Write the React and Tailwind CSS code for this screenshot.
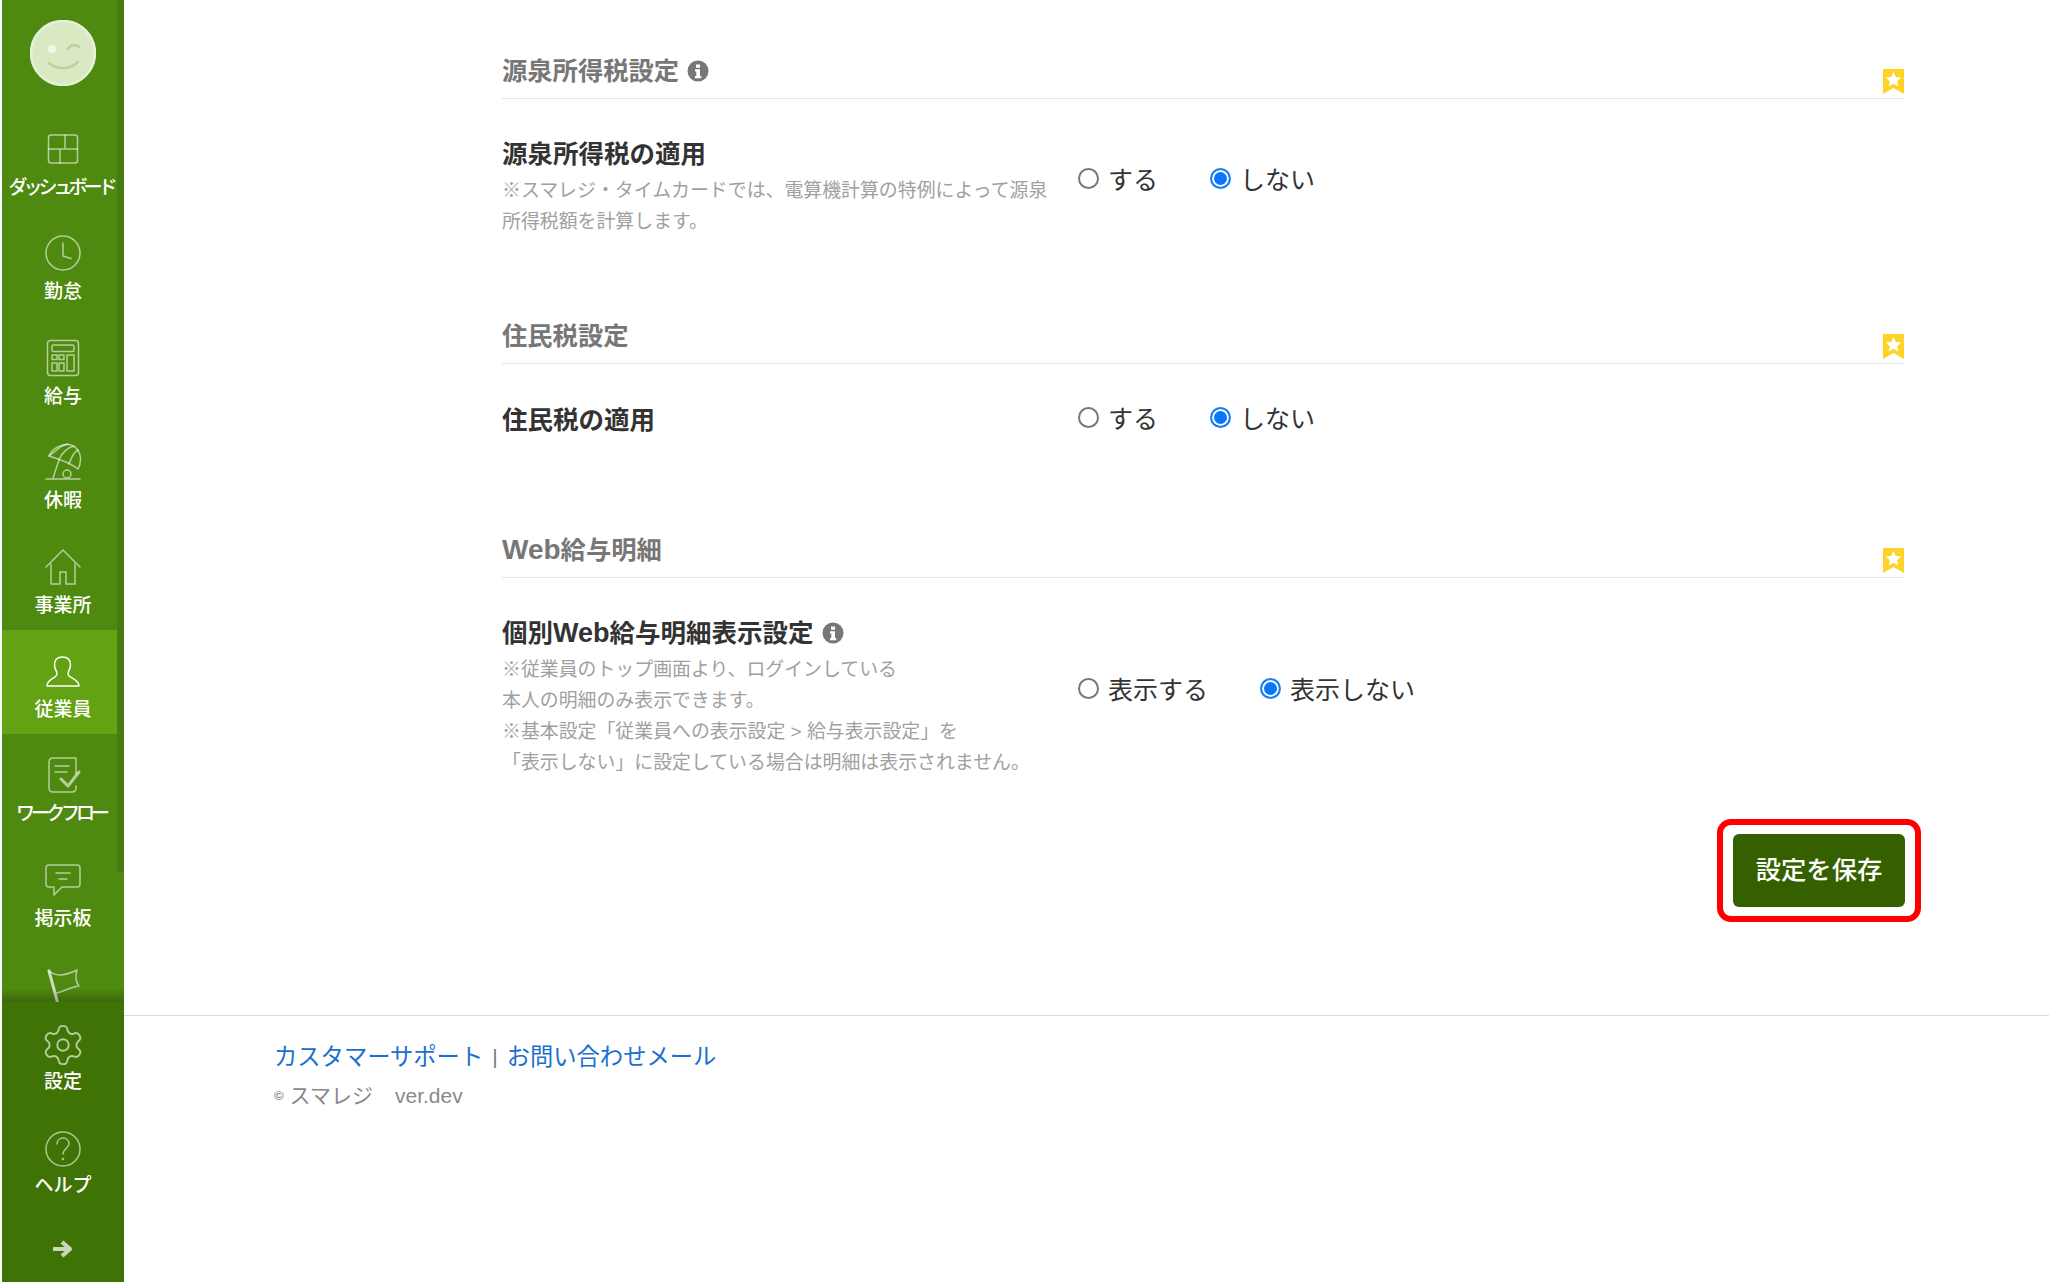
import React from "react";
import { Settings } from "lucide-react";

const FONT = "font-['Liberation_Sans','Noto_Sans_CJK_JP',sans-serif]";

const S = ({ children, w = 44, h = 44 }) => (
  <svg width={w} height={h} viewBox="0 0 44 44" fill="none" stroke="#ffffff" strokeOpacity="0.58" strokeWidth="1.5" strokeLinecap="round" strokeLinejoin="round">
    {children}
  </svg>
);

const icons = {
  dash: (
    <S>
      <rect x="7.5" y="8" width="29" height="28" rx="2.5" />
      <path d="M7.5 22h29M24 8v14M19 22v14" />
    </S>
  ),
  clock: (
    <S>
      <circle cx="22" cy="22" r="17" />
      <path d="M22 12v13l8 2.5" />
    </S>
  ),
  calc: (
    <S>
      <rect x="6.5" y="4.5" width="31" height="35" rx="3" />
      <rect x="11" y="9" width="22" height="6.5" rx="1.5" />
      <rect x="11" y="19" width="5" height="4.5" />
      <rect x="18" y="19" width="5" height="4.5" />
      <rect x="11" y="27" width="5" height="8" />
      <rect x="18" y="27" width="5" height="8" />
      <rect x="26" y="19" width="7" height="16" />
    </S>
  ),
  beach: (
    <S>
      <path d="M8 16 C12 6 28 0 36 9 C41 15 40 24 37 29 C31 24 18 19 8 16Z" />
      <path d="M8 16 C14 12 19 5 27 4 M18 19.5 C21 13 26 8 33 6 M28 24 C30 18 33 12 37 10" />
      <path d="M18 20 L12 38 M5 39h34" />
      <circle cx="26" cy="34" r="4" />
    </S>
  ),
  home: (
    <S>
      <path d="M5 22 L22 5 L39 22" />
      <path d="M10 19 V39 H19 V27 H25 V39 H34 V19" />
    </S>
  ),
  user: (
    <S>
      <path d="M21.5 8 C16 8 13.5 11 13.5 16 C13.5 20 16 22 16 25 C16 29 6 30 6 37 H38 C38 30 27 29 27 25 C27 22 29.5 20 29.5 16 C29.5 11 27 8 21.5 8Z" strokeOpacity="1" />
    </S>
  ),
  doc: (
    <S>
      <path d="M35 21 V5 H12 C9 5 8 6 8 9 V35 C8 38 9 39 12 39 H31 C34 39 35 38 35 35 V33" />
      <path d="M14 13h14M14 19h12" />
      <path d="M20 26 L27 33 L38 19" strokeWidth="3" />
    </S>
  ),
  chat: (
    <S>
      <path d="M8 7 H36 C38 7 39 8 39 10 V26 C39 28 38 29 36 29 H21 L13 37 V29 H8 C6 29 5 28 5 26 V10 C5 8 6 7 8 7Z" />
      <path d="M15 15h14M18 21h8" />
    </S>
  ),
  flag: (
    <S>
      <path d="M8 9 L17 42" strokeWidth="3" strokeOpacity="0.72" />
      <path d="M8 9 C16 16 26 13 36 8 C34 14 35 20 38 24 C30 25 24 29 16 31" />
    </S>
  ),
  help: (
    <S>
      <circle cx="22" cy="22" r="17" />
      <path d="M16 17 C16 13 19 11 22 11 C26 11 28 14 28 17 C28 21 22 22 22 27" />
      <circle cx="22" cy="32" r="0.6" />
    </S>
  ),
};

function NavItem({ icon, label, active, tight, settings, bottom }) {
  return (
    <div className={`flex w-full shrink-0 flex-col items-center ${bottom ? "h-[104px] pt-[18px]" : "h-[104.4px] pt-[19px]"} ${active ? "bg-[#62a213]" : ""}`}>
      <div className="flex h-[44px] items-center justify-center">
        {settings ? <Settings size={46} strokeWidth={1} color="#ffffff" strokeOpacity={0.62} /> : icon}
      </div>
      <span className={`${bottom ? "mt-[3px]" : "mt-[5px]"} whitespace-nowrap text-[19px] leading-[24px] font-medium text-white ${tight ? "-ml-[4px] tracking-[-4px]" : ""}`}>{label}</span>
    </div>
  );
}

function Radio({ label, checked, gap }) {
  return (
    <label className={`flex items-center text-[25px] leading-[32px] text-[#333] ${gap}`}>
      <input
        type="radio"
        readOnly
        checked={checked}
        className="mr-[9px] h-[21px] w-[21px] -translate-y-[2px] appearance-none rounded-full border-2 border-[#777] bg-white checked:border-[#1780f8] checked:bg-[#0b76f7] checked:shadow-[inset_0_0_0_2px_white]"
      />
      {label}
    </label>
  );
}

const Info = () => (
  <svg width="22" height="22" viewBox="0 0 22 22" className="ml-[8px] shrink-0">
    <circle cx="11" cy="11" r="10.5" fill="#777" />
    <path d="M9 4.5h4v3.2H9zM8 9.3h5v6.6h1.3v2.3H8v-2.3h1.3v-4.3H8z" fill="#fff" />
  </svg>
);

const Bookmark = () => (
  <svg width="21" height="25" viewBox="0 0 21 25" className="mt-[14px] mr-[1px] shrink-0">
    <path d="M0 0h21v25l-10.5-6L0 25z" fill="#fdd325" />
    <path d="M10.5 3l2.4 5 5.3.6-4 3.6 1.1 5.3-4.8-2.8-4.8 2.8 1.1-5.3-4-3.6 5.3-.6z" fill="#fff" />
  </svg>
);

function Heading({ children, info, className = "" }) {
  return (
    <div className={`flex h-[44px] items-start justify-between border-b border-[#e5e5e5] ${className}`}>
      <div className="flex h-[32px] items-center text-[25.3px] leading-[32px] font-bold text-[#777]">
        <span>{children}</span>
        {info && <Info />}
      </div>
      <Bookmark />
    </div>
  );
}

const Desc = ({ children }) => <p className="text-[18.9px] leading-[31px] whitespace-nowrap text-[#a0a0a0]">{children}</p>;

const Title = ({ children, info }) => (
  <div className="mb-[5px] flex h-[32px] items-center text-[25.5px] leading-[32px] font-bold text-[#333]">
    <span>{children}</span>
    {info && <Info />}
  </div>
);

export default function App() {
  return (
    <div className={`flex h-[1282px] overflow-hidden bg-white ${FONT}`}>
      <aside className="relative ml-[2px] flex h-full w-[122px] shrink-0 flex-col bg-[#4f8a10]">
        <div className="flex h-[108px] shrink-0 items-start justify-center pt-[20px]">
          <svg width="66" height="66" viewBox="0 0 66 66">
            <circle cx="33" cy="33" r="32" fill="#d9e9c4" stroke="#e6f1d9" strokeWidth="2.5" />
            <circle cx="22" cy="29" r="4" fill="#f0f6e6" />
            <path d="M38 29 C41 24 46 24 49 27" fill="none" stroke="#b9d39c" strokeWidth="2.5" strokeLinecap="round" />
            <path d="M19 43 C27 50 40 50 48 42" fill="none" stroke="#b9d39c" strokeWidth="2.5" strokeLinecap="round" />
          </svg>
        </div>
        <div className="relative flex flex-1 flex-col overflow-hidden">
          <NavItem icon={icons.dash} label="ダッシュボード" tight />
          <NavItem icon={icons.clock} label="勤怠" />
          <NavItem icon={icons.calc} label="給与" />
          <NavItem icon={icons.beach} label="休暇" />
          <NavItem icon={icons.home} label="事業所" />
          <NavItem icon={icons.user} label="従業員" active />
          <NavItem icon={icons.doc} label="ワークフロー" tight />
          <NavItem icon={icons.chat} label="掲示板" />
          <NavItem icon={icons.flag} label="" />
          <div className="absolute right-0 bottom-0 left-0 h-[14px] bg-gradient-to-b from-transparent to-[#00000040]" />
        </div>
        <div className="flex h-[280px] shrink-0 flex-col items-center bg-[#407305] pt-[3px]">
          <NavItem settings label="設定" bottom />
          <NavItem icon={icons.help} label="ヘルプ" bottom />
          <svg width="22" height="18" viewBox="0 0 22 18" className="mt-[27px]">
            <path d="M1 9h15M10 2l8 7-8 7" fill="none" stroke="#ffffff" strokeOpacity="0.72" strokeWidth="4.2" strokeLinejoin="round" />
          </svg>
        </div>
        <div className="absolute top-0 right-0 h-[872px] w-[7px] rounded-b bg-[#467c12]" />
      </aside>

      <main className="flex min-w-0 flex-1 flex-col">
        <div className="flex flex-col pt-[55px] pr-[144px] pl-[378px]">
          <Heading info>源泉所得税設定</Heading>
          <div className="flex pt-[39px]">
            <div className="w-[576px] shrink-0">
              <Title>源泉所得税の適用</Title>
              <Desc>※スマレジ・タイムカードでは、電算機計算の特例によって源泉</Desc>
              <Desc>所得税額を計算します。</Desc>
            </div>
            <div className="flex items-start pt-[26px]">
              <Radio label="する" gap="mr-[52px]" />
              <Radio label="しない" checked />
            </div>
          </div>

          <Heading className="mt-[83px]">住民税設定</Heading>
          <div className="flex pt-[40px]">
            <div className="w-[576px] shrink-0">
              <Title>住民税の適用</Title>
            </div>
            <div className="-mt-[1px] flex items-start">
              <Radio label="する" gap="mr-[52px]" />
              <Radio label="しない" checked />
            </div>
          </div>

          <Heading className="mt-[93px]">
            <span className="text-[28px]">Web</span>給与明細
          </Heading>
          <div className="flex pt-[39px]">
            <div className="w-[576px] shrink-0">
              <Title info>
                個別<span className="text-[27px]">Web</span>給与明細表示設定
              </Title>
              <Desc>※従業員のトップ画面より、ログインしている</Desc>
              <Desc>本人の明細のみ表示できます。</Desc>
              <Desc>※基本設定「従業員への表示設定 &gt; 給与表示設定」を</Desc>
              <Desc>「表示しない」に設定している場合は明細は表示されません。</Desc>
            </div>
            <div className="flex items-start pt-[57px]">
              <Radio label="表示する" gap="mr-[52px]" />
              <Radio label="表示しない" checked />
            </div>
          </div>

          <div className="mt-[41px] -mr-[16px] flex justify-end">
            <div className="rounded-[14px] border-[6px] border-[#ff0000] px-[10px] py-[9px]">
              <button className="block h-[73px] w-[172px] rounded-[6px] bg-[#356000] text-[25.3px] font-medium text-white">設定を保存</button>
            </div>
          </div>
        </div>

        <footer className="mt-[93px] border-t border-[#dcdcdc] pt-[25px] pl-[150px]">
          <div className="flex items-center text-[23.3px] leading-[32px] text-[#777]">
            <a className="text-[#1a6fd1]">カスタマーサポート</a>
            <span className="mx-[9px] text-[21px]">|</span>
            <a className="text-[#1a6fd1]">お問い合わせメール</a>
          </div>
          <p className="mt-[8px] flex items-center text-[21px] leading-[30px] text-[#888]">
            <span className="mr-[6px] text-[13px] font-bold">©</span>スマレジ<span className="ml-[22px]">ver.dev</span>
          </p>
        </footer>
      </main>
    </div>
  );
}
